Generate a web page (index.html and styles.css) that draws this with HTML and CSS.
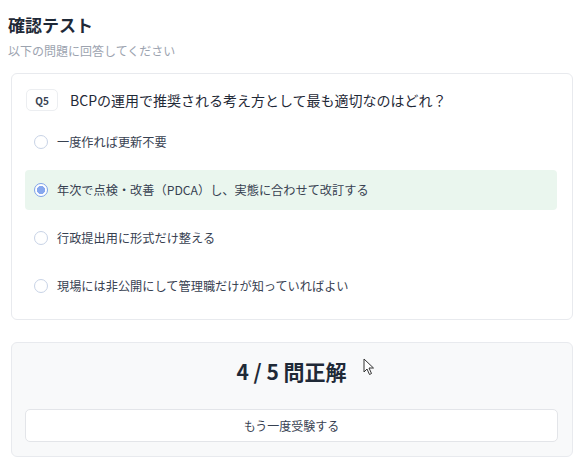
FILE: index.html
```html
<!DOCTYPE html>
<html lang="ja">
<head>
<meta charset="utf-8">
<link rel="stylesheet" href="styles.css">
</head>
<body>
<div class="page">
  <h1 class="title">確認テスト</h1>
  <p class="subtitle">以下の問題に回答してください</p>

  <section class="card quiz">
    <div class="question">
      <span class="badge">Q5</span>
      <span class="qtext">BCPの運用で推奨される考え方として最も適切なのはどれ？</span>
    </div>
    <div class="options">
      <label class="option"><span class="radio"></span><span>一度作れば更新不要</span></label>
      <label class="option selected"><span class="radio checked"></span><span>年次で点検・改善（PDCA）し、実態に合わせて改訂する</span></label>
      <label class="option"><span class="radio"></span><span>行政提出用に形式だけ整える</span></label>
      <label class="option"><span class="radio"></span><span>現場には非公開にして管理職だけが知っていればよい</span></label>
    </div>
  </section>

  <section class="card result">
    <div class="score">4 / 5 問正解</div>
    <button class="retry">もう一度受験する</button>
    <svg class="cursor" width="12" height="18" viewBox="0 0 12 18"><path d="M1 1 L1 14 L4 11 L6.5 16.5 L8.5 15.5 L6 10 L10.5 10 Z" fill="#fff" stroke="#333" stroke-width="1" stroke-linejoin="round"/></svg>
  </section>
</div>
</body>
</html>
```

FILE: styles.css
```css
* { box-sizing: border-box; }
html, body { margin: 0; padding: 0; background: #fff; }
body {
  font-family: "Noto Sans CJK JP", "Noto Sans", sans-serif;
  color: #374151;
}
.page {
  padding: 13px 6px 0 8px;
  display: flex;
  flex-direction: column;
}
.title {
  margin: 0;
  font-size: 17px;
  line-height: 24px;
  font-weight: 700;
  color: #1f2937;
}
.subtitle {
  margin: 4px 0 0;
  font-size: 12px;
  line-height: 20px;
  color: #9ca3af;
}
.card {
  margin: 12px 0 0 3px;
  border: 1px solid #e8eaee;
  border-radius: 6px;
  background: #fff;
}
.quiz {
  padding: 15px 15px 13px 13px;
}
.question {
  display: flex;
  align-items: center;
  gap: 12px;
  height: 22px;
}
.badge {
  display: inline-flex;
  align-items: center;
  justify-content: center;
  width: 32px;
  height: 22px;
  margin-left: 1px;
  border: 1px solid #eceef1;
  border-radius: 5px;
  font-size: 10px;
  font-weight: 700;
  color: #374151;
}
.qtext {
  font-size: 14px;
  color: #1f2937;
}
.options {
  display: flex;
  flex-direction: column;
  gap: 8px;
  margin-top: 11px;
}
.option {
  display: flex;
  align-items: center;
  gap: 9px;
  height: 40px;
  padding: 0 9px;
  border-radius: 4px;
  font-size: 12.2px;
  color: #374151;
}
.option.selected {
  background: #eaf6ee;
}
.radio {
  width: 14px;
  height: 14px;
  border-radius: 50%;
  border: 1px solid #c8d3e6;
  background: #fff;
  flex: none;
}
.radio.checked {
  border: 1px solid #7fa3e8;
  background: radial-gradient(circle, #86a7ee 0 3.8px, #fff 4.4px);
}
.result {
  position: relative;
  margin-top: 22px;
  padding: 14px 14px 14px 13px;
  background: #f8f9fa;
  display: flex;
  flex-direction: column;
  align-items: stretch;
  gap: 24px;
}
.score {
  text-align: center;
  font-size: 21px;
  line-height: 28px;
  font-weight: 700;
  color: #1f2937;
}
.retry {
  height: 33px;
  border: 1px solid #e3e5e9;
  border-radius: 5px;
  background: #fff;
  font-family: "Noto Sans CJK JP", "Noto Sans", sans-serif;
  font-size: 12px;
  color: #374151;
}
.cursor {
  position: absolute;
  left: 351px;
  top: 15px;
}
```
